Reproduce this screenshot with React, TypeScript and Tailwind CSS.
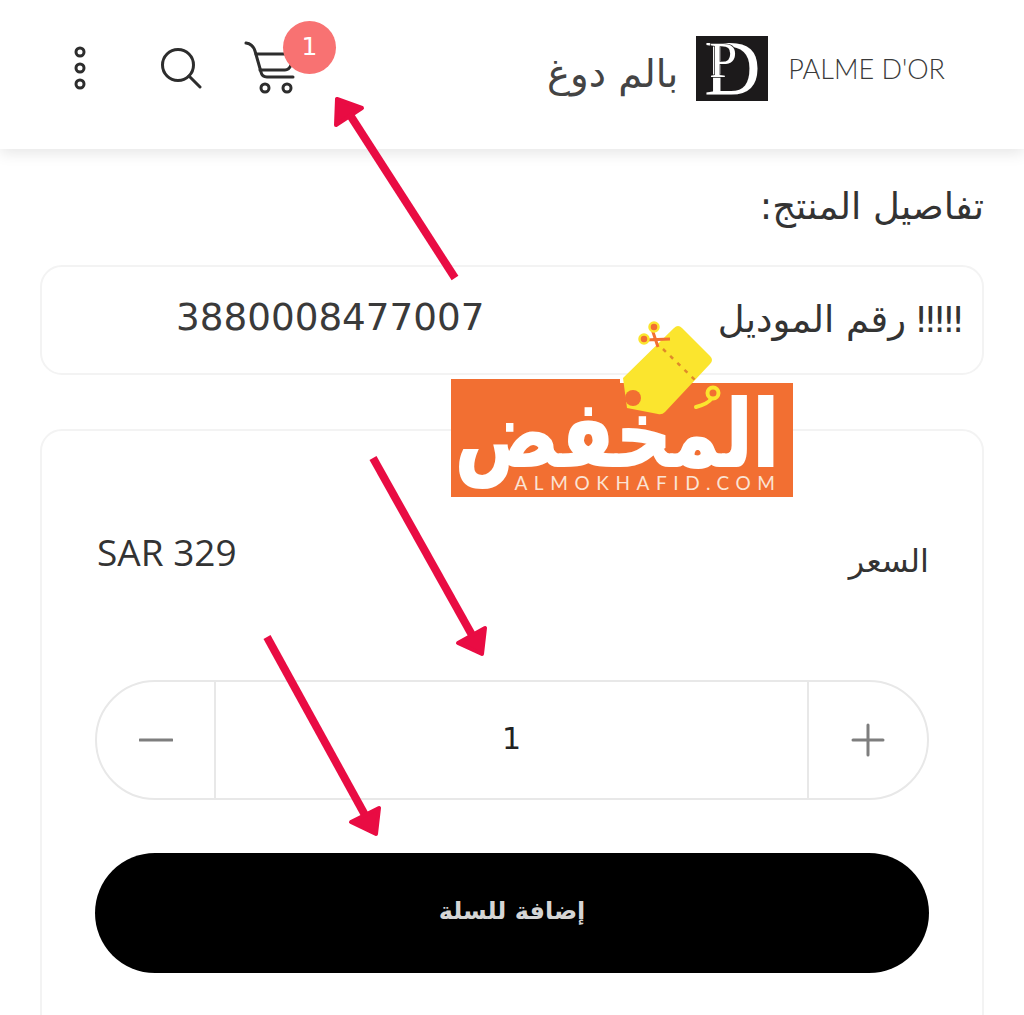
import React from "react";

const dejavu = "font-['DejaVu_Sans',sans-serif]";

function Overlay() {
  return (
    <svg className="absolute left-0 top-0 pointer-events-none" width="1024" height="1015" viewBox="0 0 1024 1015">
      {/* watermark */}
      <polygon points="451,379 620,379 620,383 793,383 793,497 451,497" fill="#f26f32" />
      <path d="M627 408 L623 378 L674 328 Q678 324 682 328 L710 356 Q714 360 710 364 L665 412 Q662 415 658 414 Z" fill="#fbe52e" />
      <circle cx="633" cy="398" r="8" fill="#f26f32" />
      <path d="M663 349 L696 381" stroke="#e08a2a" strokeWidth="2.5" strokeDasharray="4 6" fill="none" />
      <path d="M652 329 L658 347 M645 340 L670 339" stroke="#f26f32" strokeWidth="3" fill="none" />
      <circle cx="654" cy="327" r="4.5" fill="#f26f32" stroke="#fbe52e" strokeWidth="2.5" />
      <circle cx="644" cy="339" r="4.5" fill="#f26f32" stroke="#fbe52e" strokeWidth="2.5" />
      <path d="M696 407 Q708 404 712 398" stroke="#fbe52e" strokeWidth="4" fill="none" strokeLinecap="round" />
      <circle cx="713" cy="393" r="5.5" fill="#f26f32" stroke="#fbe52e" strokeWidth="4" />
      <text x="617" y="466" textAnchor="middle" fill="#ffffff" stroke="#ffffff" strokeWidth="2" fontFamily="'DejaVu Sans',sans-serif" fontWeight="700" fontSize="92" textLength="324" lengthAdjust="spacingAndGlyphs">المخفض</text>
      <text x="648" y="490" textAnchor="middle" fill="#fbe3d4" fontFamily="Lato,sans-serif" fontSize="19" letterSpacing="6.6">ALMOKHAFID.COM</text>
      {/* arrows */}
      <g stroke="#e90c43" strokeWidth="8" fill="none">
        <line x1="455" y1="278" x2="350" y2="115" />
        <line x1="373" y1="458" x2="472" y2="635" />
        <line x1="267" y1="637" x2="365" y2="815" />
      </g>
      <g fill="#e90c43" stroke="#e90c43" strokeWidth="4" strokeLinejoin="round">
        <polygon points="337,99 336,125 362,108" />
        <polygon points="458,643 485,628 482,654" />
        <polygon points="351,822 379,808 376,834" />
      </g>
    </svg>
  );
}

export default function App() {
  return (
    <div className="relative h-[1015px] w-[1024px] overflow-hidden bg-white text-[#333333]">
      <header className="relative flex h-[149px] items-center justify-between bg-white pl-[70px] pr-[79px] shadow-[0_4px_14px_rgba(0,0,0,0.1)]">
        <div className="flex items-center pb-[14px]">
          <svg width="22" height="48" viewBox="0 0 22 48" fill="none" stroke="#2d2d2d" strokeWidth="3">
            <circle cx="10" cy="8" r="4" />
            <circle cx="10" cy="24" r="4" />
            <circle cx="10" cy="40" r="4" />
          </svg>
          <svg className="ml-[68px]" width="42" height="44" viewBox="0 0 42 44" fill="none" stroke="#2d2d2d" strokeWidth="3" strokeLinecap="round">
            <circle cx="18" cy="19" r="15.5" />
            <path d="M29 30 L40 41" />
          </svg>
          <div className="relative ml-[42px]">
            <svg width="52" height="54" viewBox="0 0 52 54" fill="none" stroke="#2d2d2d" strokeWidth="3" strokeLinecap="round" strokeLinejoin="round">
              <path d="M2 2 Q9 3 11 10 L17 31 Q18 36 23 36 L49 36" />
              <path d="M12 13 L47 13" />
              <path d="M16 29 L41 29 Q45 29 47 24" />
              <circle cx="21" cy="47" r="4" />
              <circle cx="43" cy="47" r="4" />
            </svg>
            <div className={`absolute left-[39px] top-[-20px] flex h-[53px] w-[53px] items-center justify-center rounded-full bg-[#f87272] text-[25px] font-normal text-white ${dejavu}`}>1</div>
          </div>
        </div>
        <div className="flex items-center pb-[13px]">
          <span className={`relative top-[6px] text-[38.7px] leading-none text-[#444444] ${dejavu}`} dir="rtl">بالم دوغ</span>
          <div className="relative ml-[18px] h-[65px] w-[72px] bg-[#1c1a1b] font-['Liberation_Serif',serif] text-white">
            <span className="absolute left-[8px] top-[-7px] text-[78px] leading-none">D</span>
            <span className="absolute left-[13px] top-[-1px] text-[50px] leading-none text-white [-webkit-text-stroke:1.5px_#1c1a1b] [paint-order:stroke]">P</span>
          </div>
          <span className="ml-[20px] font-['Lato',sans-serif] text-[27px] font-light leading-none text-[#3a3a3a]">PALME D'OR</span>
        </div>
      </header>

      <main className={`px-[40px] ${dejavu}`}>
        <h2 className="mt-[34px] h-[48px] text-right text-[37px] font-normal leading-[48px] text-[#333333]" dir="rtl">تفاصيل المنتج:</h2>

        <section className="mt-[34px] flex h-[110px] items-center justify-between rounded-[22px] border-2 border-[#f3f3f3] pl-[134px] pr-[24px]">
          <span className="relative top-[-2px] text-[37.3px] leading-none text-[#3a3a3a]">3880008477007</span>
          <div className="flex items-center gap-[8px] leading-none text-[#333333]" dir="rtl">
            <span className="inline-block w-[44px] text-[35.5px] tracking-[-5px]" dir="ltr">!!!!!</span>
            <span className="text-[36.9px]">رقم الموديل</span>
          </div>
        </section>

        <section className="mt-[54px] h-[640px] rounded-[22px] border-2 border-[#f3f3f3] px-[53px] pt-[96px]">
          <div className="flex h-[60px] items-center justify-between">
            <span className="relative top-[-6px] left-[2px] font-['Open_Sans',sans-serif] text-[37px] leading-none text-[#333333]">SAR 329</span>
            <span className="pt-[8px] text-[32px] leading-none text-[#333333]" dir="rtl">السعر</span>
          </div>

          <div className="mt-[93px] flex h-[120px] items-stretch rounded-full border-2 border-[#e8e8e8]">
            <div className="flex w-[119px] items-center justify-center border-r-2 border-[#e8e8e8]">
              <svg width="34" height="6" viewBox="0 0 34 6"><line x1="1" y1="3" x2="33" y2="3" stroke="#7e7e7e" strokeWidth="3" strokeLinecap="round" /></svg>
            </div>
            <div className="flex flex-1 items-center justify-center pb-[4px] text-[30px] text-[#222222]">1</div>
            <div className="flex w-[120px] items-center justify-center border-l-2 border-[#e8e8e8]">
              <svg width="34" height="34" viewBox="0 0 34 34" stroke="#7e7e7e" strokeWidth="3" strokeLinecap="round"><line x1="2" y1="17" x2="32" y2="17" /><line x1="17" y1="2" x2="17" y2="32" /></svg>
            </div>
          </div>

          <button className="mt-[53px] flex h-[120px] w-full items-center justify-center rounded-full bg-black pb-[4px] text-[24px] font-bold text-[#d5d5d5]" dir="rtl">إضافة للسلة</button>
        </section>
      </main>

      <Overlay />
    </div>
  );
}
